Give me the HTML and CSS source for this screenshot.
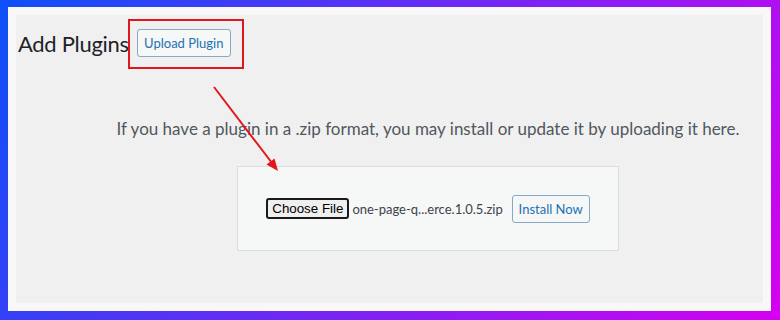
FILE: index.html
```html
<!DOCTYPE html>
<html lang="en">
<head>
    <meta charset="UTF-8">
    <meta name="viewport" content="width=device-width, initial-scale=1.0">
    <title>Add Plugins</title>
    <link rel="stylesheet" href="styles.css">
</head>
<body>
    <div class="frame">
        <div class="frame-inner">
            <div class="wrap">
                <div class="page-header">
                    <h1>Add Plugins</h1>
                    <button class="button">Upload Plugin</button>
                </div>
                <div class="upload-plugin">
                    <p class="install-help">If you have a plugin in a .zip format, you may install or update it by uploading it here.</p>
                    <form class="upload-form">
                        <span class="file-button">Choose File</span>
                        <span class="file-name">one-page-q...erce.1.0.5.zip</span>
                        <button class="button install">Install Now</button>
                    </form>
                </div>
            </div>
        </div>
        <!-- annotation overlay -->
        <div class="highlight"></div>
        <svg class="arrow" width="780" height="320" viewBox="0 0 780 320">
            <line x1="214" y1="87" x2="272" y2="163" stroke="#e3151d" stroke-width="2"/>
            <polygon points="278,171 266.5,164.5 274.5,158.5" fill="#e3151d"/>
        </svg>
    </div>
</body>
</html>
```

FILE: styles.css
```css
body {
    margin: 0;
    padding: 0;
    font-family: Lato, 'Noto Sans', sans-serif;
}

.frame {
    position: relative;
    width: 780px;
    height: 320px;
    box-sizing: border-box;
    padding: 7px 9px 9px 8px;
    background: linear-gradient(120deg, #0d50f8 0%, #d500f0 100%);
}

.frame-inner {
    height: 100%;
    box-sizing: border-box;
    border: 8px solid rgba(255, 255, 255, 0.5);
    background-color: #f0f0f0;
}

.wrap {
    padding: 14px 0 0 2px;
}

.page-header {
    display: flex;
    align-items: center;
    height: 28px;
}

.page-header h1 {
    margin: 0;
    font-size: 22px;
    font-weight: 400;
    letter-spacing: -0.3px;
    color: #1d2327;
}

.button {
    font-family: Lato, 'Noto Sans', sans-serif;
    font-size: 13px;
    color: #2271b1;
    background-color: #f6f7f7;
    border: 1px solid #86a9c8;
    border-radius: 3px;
    padding: 0;
    height: 28px;
    white-space: nowrap;
    cursor: pointer;
}

.page-header .button {
    margin-left: 8px;
    width: 94px;
}

.upload-plugin {
    padding-left: 75px;
}

.install-help {
    margin: 61px 0 0;
    text-align: center;
    font-size: 17px;
    color: #50575e;
}

.upload-form {
    margin: 27px auto 0;
    width: 382px;
    height: 85px;
    box-sizing: border-box;
    background-color: #f6f7f7;
    border: 1px solid #dcdcde;
    display: flex;
    align-items: center;
    justify-content: center;
}

.file-button {
    font-family: 'Liberation Sans', Arial, sans-serif;
    font-size: 13.33px;
    color: #000;
    background-color: #efefef;
    border: 2px solid #1a1a1a;
    border-radius: 3px;
    padding: 1px 4px;
    line-height: 15px;
}

.file-name {
    font-family: Lato, sans-serif;
    font-size: 13px;
    color: #3c434a;
    margin-left: 3px;
}

.button.install {
    margin-left: 9px;
    width: 78px;
}

.highlight {
    position: absolute;
    left: 128px;
    top: 19px;
    width: 116px;
    height: 50px;
    box-sizing: border-box;
    border: 2px solid #e0161e;
}

.arrow {
    position: absolute;
    left: 0;
    top: 0;
}
```
